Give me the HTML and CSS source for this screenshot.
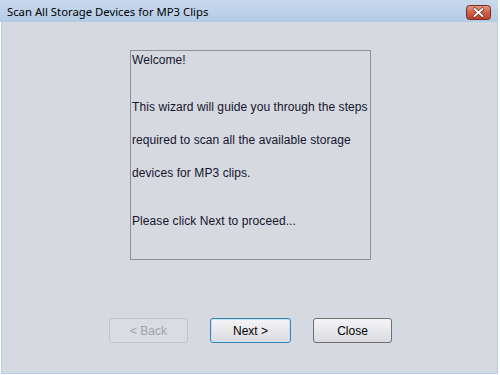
FILE: index.html
```html
<!DOCTYPE html>
<html lang="en">
<head>
    <meta charset="UTF-8">
    <title>Scan All Storage Devices for MP3 Clips</title>
    <link rel="stylesheet" href="styles.css">
</head>
<body>
    <div class="window">
        <!-- Title bar -->
        <div class="titlebar">
            <span class="title">Scan All Storage Devices for MP3 Clips</span>
            <span class="close-btn">
                <svg width="25" height="15" viewBox="0 0 25 15">
                    <defs>
                        <linearGradient id="red" x1="0" y1="0" x2="0" y2="1">
                            <stop offset="0" stop-color="#e39a86"/>
                            <stop offset="0.5" stop-color="#d0604a"/>
                            <stop offset="1" stop-color="#b8402c"/>
                        </linearGradient>
                    </defs>
                    <rect x="0.5" y="0.5" width="24" height="14" rx="3" fill="url(#red)" stroke="#7a2a20"/>
                    <path d="M8.5 4 L16.5 11 M16.5 4 L8.5 11" stroke="#5a2018" stroke-width="3.2" stroke-linecap="round"/>
                    <path d="M8.5 4 L16.5 11 M16.5 4 L8.5 11" stroke="#ffffff" stroke-width="2" stroke-linecap="round"/>
                </svg>
            </span>
        </div>

        <!-- Wizard page -->
        <div class="content">
            <div class="message">
                <p class="welcome">Welcome!</p>
                <p>This wizard will guide you through the steps<br>
                   required to scan all the available storage<br>
                   devices for MP3 clips.</p>
                <p>Please click Next to proceed...</p>
            </div>

            <div class="buttons">
                <button class="btn" disabled>&lt; Back</button>
                <button class="btn focused">Next &gt;</button>
                <button class="btn">Close</button>
            </div>
        </div>
    </div>
</body>
</html>
```

FILE: styles.css
```css
body {
    margin: 0;
    background: #ffffff;
    font-family: "Liberation Sans", Arial, sans-serif;
}
.window {
    width: 498px;
    height: 374px;
    display: flex;
    flex-direction: column;
}
.titlebar {
    height: 22px;
    display: flex;
    align-items: center;
    justify-content: space-between;
    padding: 0 7px 0 7px;
    background: linear-gradient(to bottom, #c9d9ec, #b3cbe6);
}
.title {
    font-family: "Noto Sans", sans-serif;
    font-size: 11.3px;
    color: #000000;
}
.close-btn {
    display: flex;
    margin-top: 2px;
}
.content {
    flex: 1;
    background: #d6d9df;
    border: 1px solid #b6cde8;
    border-top: none;
    margin-left: 1px;
}
.message {
    width: 239px;
    height: 208px;
    margin: 28px 0 0 128px;
    border: 1px solid #8e9096;
    font-size: 12px;
    color: #14142e;
}
.message p {
    margin: 0 0 15px 0;
    line-height: 33px;
    padding-left: 1px;
    letter-spacing: 0.08px;
}
.message .welcome {
    line-height: 17px;
    padding-top: 1px;
    margin-bottom: 22px;
}
.buttons {
    display: flex;
    gap: 22px;
    margin: 58px 0 0 107px;
}
.btn {
    width: 79px;
    height: 25px;
    padding: 0;
    font-family: "Liberation Sans", Arial, sans-serif;
    font-size: 12px;
    color: #000000;
    border: 1px solid #707070;
    border-radius: 3px;
    background: linear-gradient(to bottom, #f4f4f6, #e9e9ec 50%, #d9dadf);
}
.btn.focused {
    width: 81px;
    border-color: #3c7fb1;
    box-shadow: inset 0 0 0 1px #c4e3f8;
}
.btn:disabled {
    color: #a0a3a8;
    border-color: #c2c4c9;
    background: #d9dce2;
}
```
